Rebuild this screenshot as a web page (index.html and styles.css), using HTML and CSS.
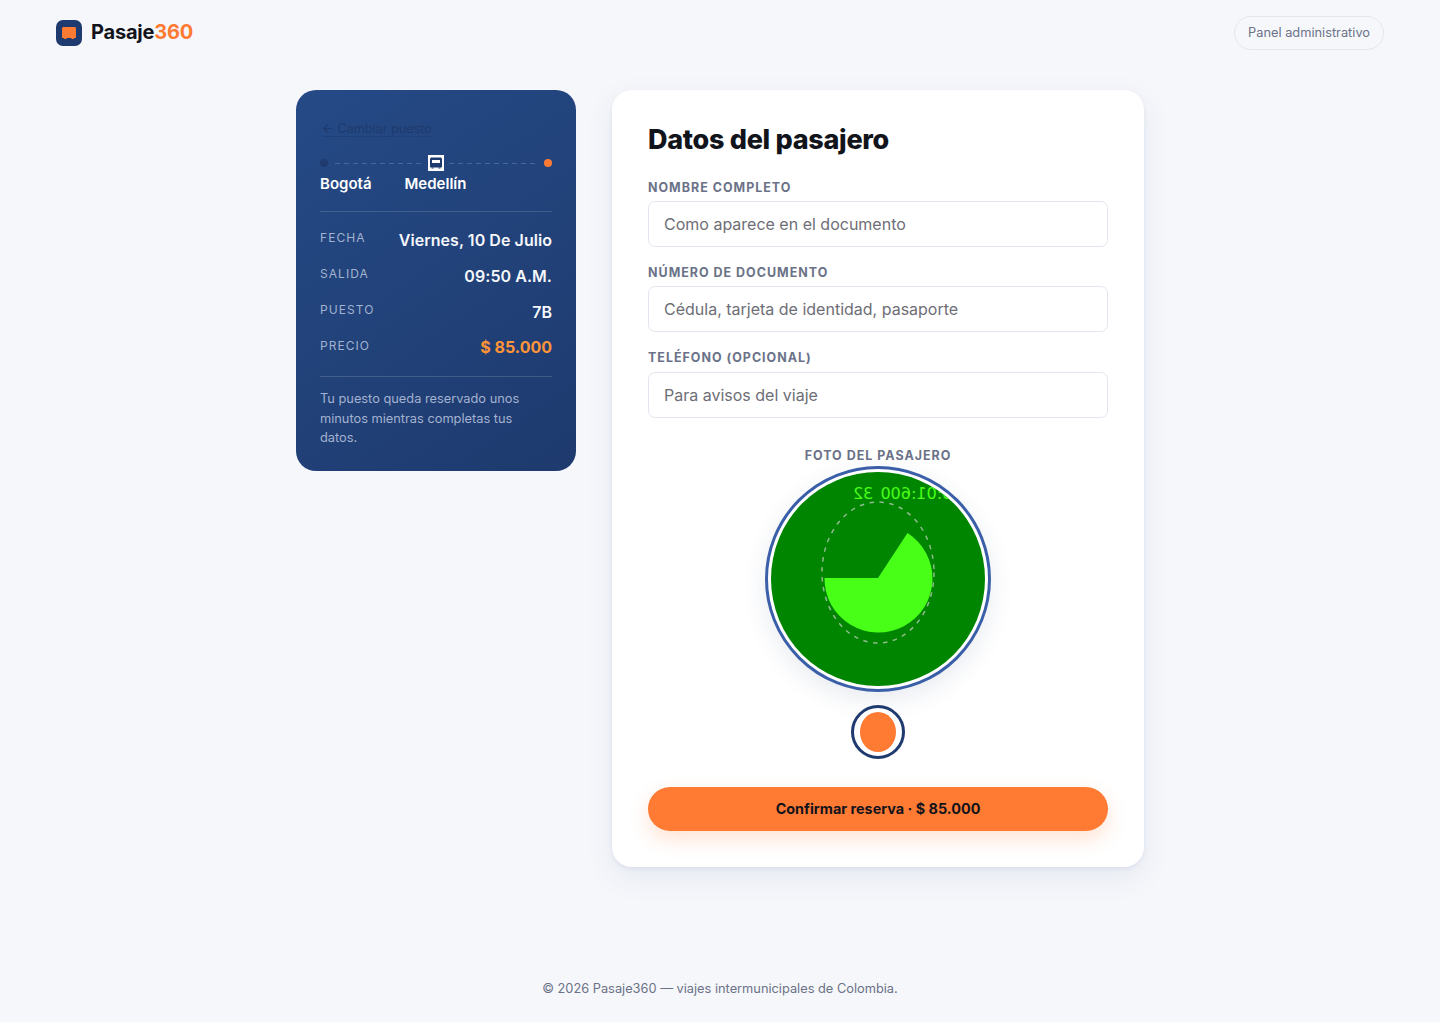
FILE: index.html
```html
<!DOCTYPE html>
<html lang="es">
<head>
<meta charset="utf-8">
<title>Pasaje360</title>
<link rel="stylesheet" href="styles.css">
</head>
<body>
<header class="topbar">
  <a class="brand" href="#">
    <span class="brand-mark">
      <svg viewBox="0 0 16 16" width="16" height="16"><path class="bus-fill" d="M1 3.500C1 2.700 1.700 2 2.500 2h11c.8 0 1.500.7 1.500 1.500V12c0 .6-.4 1-1 1H2c-.6 0-1-.4-1-1z"/><rect class="bus-fill" x="3" y="13" width="2.500" height="1"/><rect class="bus-fill" x="10.500" y="13" width="2.500" height="1"/></svg>
    </span>
    <span class="brand-name">Pasaje<span class="brand-accent">360</span></span>
  </a>
  <a class="admin-link" href="#">Panel administrativo</a>
</header>

<main class="layout">
  <aside class="summary">
    <a class="back-link" href="#">← Cambiar puesto</a>
    <div class="route-line">
      <span class="dot dot-start"></span>
      <span class="dash"></span>
      <span class="route-bus">
        <svg viewBox="0 0 16 16" width="16" height="16"><path class="route-bus-body" fill-rule="evenodd" d="M2 4c0-.9.7-1.500 1.500-1.500h9c.8 0 1.500.6 1.500 1.500v7.500c0 .6-.4 1-1 1H3c-.6 0-1-.4-1-1zM4 5v3h8V5z"/><rect class="route-bus-body" x="3.500" y="12.500" width="2" height="1"/><rect class="route-bus-body" x="10.500" y="12.500" width="2" height="1"/></svg>
      </span>
      <span class="dash"></span>
      <span class="dot dot-end"></span>
    </div>
    <div class="route-names"><span>Bogotá</span><span>Medellín</span></div>
    <dl class="facts">
      <div class="fact"><dt>FECHA</dt><dd>Viernes, 10 De Julio</dd></div>
      <div class="fact"><dt>SALIDA</dt><dd>09:50 A.M.</dd></div>
      <div class="fact"><dt>PUESTO</dt><dd>7B</dd></div>
      <div class="fact"><dt>PRECIO</dt><dd class="price">$ 85.000</dd></div>
    </dl>
    <p class="note">Tu puesto queda reservado unos minutos mientras completas tus datos.</p>
  </aside>

  <form class="card">
    <h1>Datos del pasajero</h1>
    <label class="field"><span class="field-label">NOMBRE COMPLETO</span><input type="text" placeholder="Como aparece en el documento"></label>
    <label class="field"><span class="field-label">NÚMERO DE DOCUMENTO</span><input type="text" placeholder="Cédula, tarjeta de identidad, pasaporte"></label>
    <label class="field"><span class="field-label">TELÉFONO (OPCIONAL)</span><input type="text" placeholder="Para avisos del viaje"></label>
    <div class="photo">
      <span class="field-label photo-label">FOTO DEL PASAJERO</span>
      <div class="camera">
        <svg viewBox="0 0 214 214" width="214" height="214">
          <rect class="cam-bg" width="214" height="214"/>
          <path class="cam-pie" d="M107 106L136.500 61A54 54 0 1 1 53.500 106Z"/>
          <ellipse class="cam-guide" cx="107" cy="100.500" rx="56" ry="70.500"/>
          <text class="cam-text" text-anchor="end" transform="translate(82 27) scale(-1 1)">10:01:600 32</text>
        </svg>
      </div>
      <button class="shutter" type="button"><span></span></button>
    </div>
    <button class="submit" type="button">Confirmar reserva · $ 85.000</button>
  </form>
</main>

<footer class="footer">© 2026 Pasaje360 — viajes intermunicipales de Colombia.</footer>
</body>
</html>
```

FILE: styles.css
```css
* { box-sizing: border-box; }
html, body { margin: 0; padding: 0; }
body {
  background: #f6f7fb;
  color: #12141c;
  font-family: "Inter", "Liberation Sans", sans-serif;
  min-height: 1022px;
  display: flex;
  flex-direction: column;
}
a { text-decoration: none; color: inherit; }

.topbar {
  height: 66px;
  padding: 0 56px;
  display: flex;
  align-items: center;
  justify-content: space-between;
}
.brand { display: flex; align-items: center; gap: 9px; }
.brand-mark {
  width: 26px; height: 26px;
  border-radius: 7px;
  background: #1e3a6e;
  display: flex; align-items: center; justify-content: center;
}
.bus-fill { fill: #ff7a33; }
.brand-name {
  font-family: "Inter", sans-serif;
  font-weight: 700;
  font-size: 20px;
  letter-spacing: -0.2px;
  padding-bottom: 2px;
}
.brand-accent { color: #ff7a33; }
.admin-link {
  height: 34px;
  padding: 0 13px 1px;
  display: flex; align-items: center;
  border: 1px solid #e4e6ef;
  border-radius: 17px;
  font-size: 12.8px;
  color: #6b7288;
}

.layout {
  display: flex;
  justify-content: center;
  align-items: flex-start;
  gap: 36px;
  padding-top: 24px;
}
.summary {
  width: 280px;
  height: 381px;
  padding: 31px 24px 0;
  border-radius: 20px;
  background: linear-gradient(145deg, #254a86 0%, #1e3a6e 100%);
  color: #fff;
}
.back-link {
  display: block;
  width: max-content;
  margin-left: 2px;
  font-size: 12.6px;
  line-height: 15px;
  color: #1e3a6e;
  border-bottom: 1px solid rgba(30,58,110,0.6);
}
.route-line {
  margin-top: 18px;
  height: 16px;
  display: flex;
  align-items: center;
  gap: 7px;
}
.dot { width: 8px; height: 8px; border-radius: 50%; flex: none; }
.dot-start { background: #1e3a6e; }
.dot-end { background: #ff7a33; }
.dash {
  flex: 1;
  height: 1px;
  background: repeating-linear-gradient(90deg, #44689f 0 5px, transparent 5px 9px);
}
.route-bus {
  width: 16px; height: 16px; flex: none;
  background: #fff;
  display: block;
  margin: 0 -2px;
}
.route-bus svg { display: block; }
.route-bus-body { fill: #1e3a6e; }
.route-names {
  height: 25px;
  display: flex;
  gap: 33px;
  font-weight: 600;
  font-size: 15px;
  line-height: 25px;
}
.facts {
  margin: 15px 0 0;
  padding: 10px 0 10px;
  border-top: 1px solid rgba(255,255,255,0.15);
  border-bottom: 1px solid rgba(255,255,255,0.15);
}
.fact {
  display: flex;
  justify-content: space-between;
  height: 36px;
  padding-top: 8px;
}
.fact dt {
  font-size: 12px;
  line-height: 15px;
  letter-spacing: 1.05px;
  color: #a3b2cf;
}
.fact dd {
  margin: 0;
  font-size: 16px;
  line-height: 20px;
  font-weight: 600;
  letter-spacing: 0.05px;
  color: #f5f7fb;
}
.fact .price { color: #ff9438; font-weight: 700; line-height: 18px; letter-spacing: 0; }
.note {
  margin: 12px 0 0;
  font-size: 12.8px;
  line-height: 19.5px;
  color: #a3b2cf;
}

.card {
  width: 532px;
  height: 777px;
  padding: 30px 36px 0;
  background: #fff;
  border-radius: 20px;
  box-shadow: 0 2px 4px rgba(30,58,110,0.07), 0 10px 30px rgba(30,58,110,0.08);
}
.card h1 {
  margin: 0 0 19.6px;
  font-size: 27px;
  line-height: 40px;
  font-weight: 800;
  letter-spacing: -0.3px;
}
.field { display: block; margin-bottom: 18.2px; }
.field-label {
  display: block;
  font-size: 12.48px;
  line-height: 15px;
  font-weight: 700;
  letter-spacing: 1px;
  color: #6b7288;
  margin-bottom: 6.2px;
}
.field input {
  display: block;
  width: 100%;
  height: 46px;
  padding: 0 15px;
  border: 1px solid #e4e6ef;
  border-radius: 7px;
  background: #fff;
  font-family: inherit;
  font-size: 16px;
}
.field input::placeholder { color: #6e6e76; opacity: 1; }
.photo {
  display: flex;
  flex-direction: column;
  align-items: center;
  margin-top: 30.3px;
}
.photo .photo-label { margin-bottom: 2.9px; }
.camera {
  width: 226px; height: 226px;
  border-radius: 50%;
  border: 3px solid #3a5fa8;
  padding: 3px;
  background: #fff;
  box-shadow: 0 8px 24px rgba(30,58,110,0.10);
  overflow: hidden;
}
.camera svg { display: block; border-radius: 50%; }
.cam-bg { fill: #008500; }
.cam-pie { fill: #48ff18; }
.cam-guide { fill: none; stroke: #8fbb8f; stroke-width: 1.5; stroke-dasharray: 4.5 5.5; }
.cam-text { fill: #48ff18; font-family: "DejaVu Sans", sans-serif; font-size: 16px; word-spacing: 2px; }
.shutter {
  margin-top: 13px;
  width: 54px; height: 54px;
  border-radius: 50%;
  border: 3px solid #1e3a6e;
  background: #fff;
  padding: 0;
  display: flex; align-items: center; justify-content: center;
}
.shutter span { width: 36px; height: 40px; border-radius: 50%; background: #ff7a33; display: block; }
.submit {
  display: block;
  margin-top: 28px;
  width: 100%;
  height: 44px;
  border: 0;
  border-radius: 22px;
  background: #ff7a33;
  color: #12141c;
  font-family: inherit;
  font-size: 14.4px;
  font-weight: 700;
  box-shadow: 0 8px 20px rgba(255,122,51,0.22);
}
.footer {
  margin-top: auto;
  height: 68px;
  padding-top: 27px;
  text-align: center;
  font-size: 12.8px;
  line-height: 16px;
  color: #6b7288;
}
```
